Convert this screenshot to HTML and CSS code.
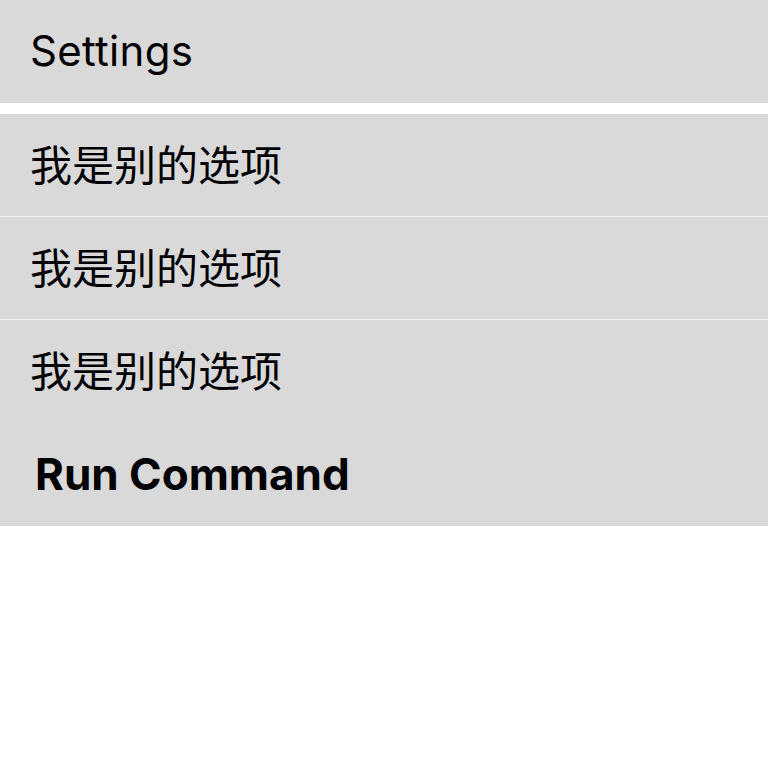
FILE: index.html
```html
<!DOCTYPE html>
<html lang="zh">
<head>
<meta charset="utf-8">
<title>Settings</title>
<link rel="stylesheet" href="styles.css">
</head>
<body>
<div class="page">
  <div class="title">Settings</div>
  <div class="list">
    <div class="row sep">我是别的选项</div>
    <div class="row sep">我是别的选项</div>
    <div class="row">我是别的选项</div>
    <div class="row cmd">Run Command</div>
  </div>
</div>
</body>
</html>
```
FILE: styles.css
```css
html, body {
  margin: 0;
  padding: 0;
  background: #ffffff;
}
.page {
  display: flex;
  flex-direction: column;
  font-family: "Inter", "Noto Sans CJK SC", sans-serif;
  color: #000;
}
.title {
  height: 103px;
  background: #d9d9d9;
  display: flex;
  align-items: center;
  padding-left: 30px;
  padding-bottom: 2px;
  box-sizing: border-box;
  font-size: 42px;
  font-weight: 400;
  letter-spacing: 0.3px;
}
.list {
  margin-top: 11px;
  display: flex;
  flex-direction: column;
}
.row {
  height: 103px;
  background: #d9d9d9;
  display: flex;
  align-items: center;
  padding-left: 30px;
  padding-bottom: 6px;
  font-family: "Noto Sans CJK SC", sans-serif;
  font-size: 42px;
  box-sizing: border-box;
}
.row.sep {
  border-bottom: 1px solid #f2f2f2;
}
.row.cmd {
  font-family: "Inter", "Noto Sans CJK SC", sans-serif;
  font-weight: 700;
  font-size: 44px;
  padding-left: 35px;
  padding-bottom: 2px;
}
```
